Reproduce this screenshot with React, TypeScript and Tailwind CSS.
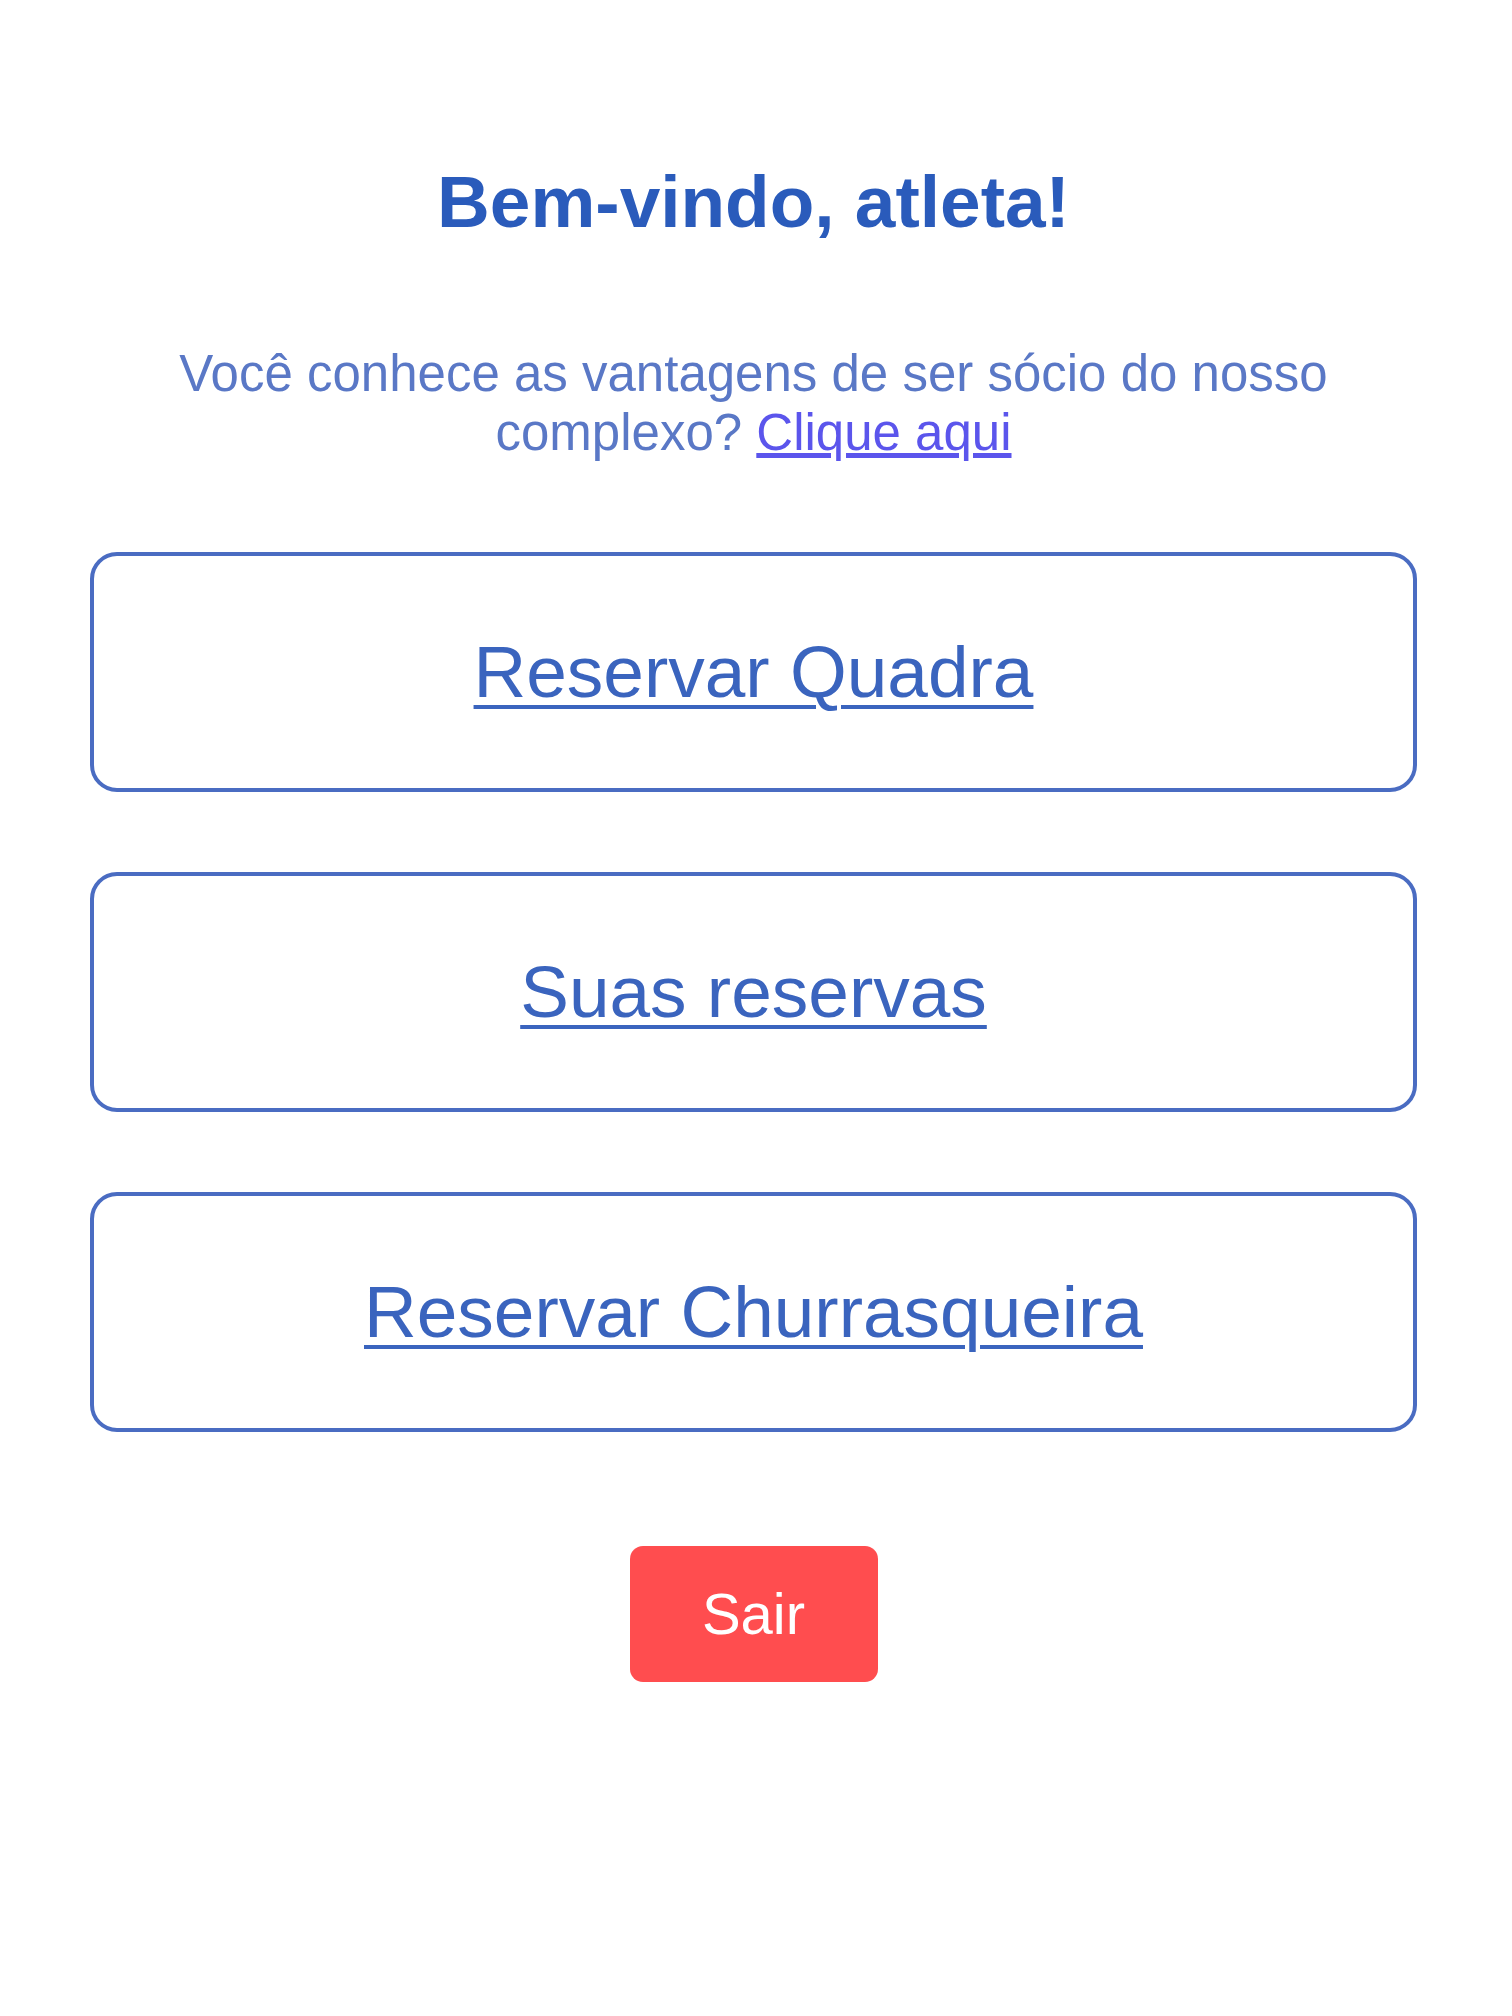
import React from 'react';

const options = ['Reservar Quadra', 'Suas reservas', 'Reservar Churrasqueira'];

const App = () => {
  return (
    <div
      className="min-h-[2016px] w-full bg-white flex flex-col items-center pl-[90px] pr-[95px] pt-[160px]"
      style={{ fontFamily: '"Liberation Sans", Arial, sans-serif' }}
    >
      <h1 className="text-[73px] leading-[84px] font-bold text-[#2a5bbb]">
        Bem-vindo, atleta!
      </h1>

      <p className="mt-[100px] text-center text-[51px] leading-[59px] text-[#5a78c6] max-w-[1200px]">
        Você conhece as vantagens de ser sócio do nosso complexo?{' '}
        <a href="#" className="underline text-[#5b55ec]">
          Clique aqui
        </a>
      </p>

      <div className="mt-[90px] w-full flex flex-col gap-[80px]">
        {options.map((label) => (
          <button
            key={label}
            className="w-full h-[240px] border-[4px] border-[#4a6cc2] rounded-[27px] bg-white flex items-center justify-center"
          >
            <span className="text-[73px] leading-[84px] underline decoration-[4px] underline-offset-[8px] text-[#3a64be]">
              {label}
            </span>
          </button>
        ))}
      </div>

      <button className="mt-[114px] w-[248px] h-[136px] rounded-[13px] bg-[#ff4d4f] text-white text-[58px] leading-none flex items-center justify-center">
        Sair
      </button>
    </div>
  );
};

export default App;
